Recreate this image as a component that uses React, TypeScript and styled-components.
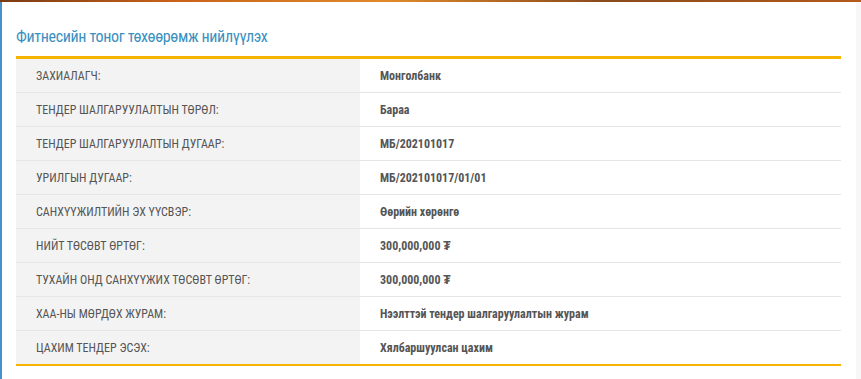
import React from 'react';
import styled, { createGlobalStyle } from 'styled-components';

const GlobalStyle = createGlobalStyle`
  html, body {
    margin: 0;
    padding: 0;
    background: #f7f7f7;
  }
  body {
    font-family: "Roboto Condensed", "Roboto", "Liberation Sans", sans-serif;
  }
`;

const Banner = styled.div`
  height: 2px;
  background: linear-gradient(90deg, #7a3a12 0%, #c8621a 20%, #e08a2a 45%, #8a4a1c 70%, #b45a1a 100%);
`;

const Page = styled.div`
  display: flex;
  height: 377px;
`;

const Content = styled.main`
  flex: 0 0 856px;
  box-sizing: border-box;
  background: #fff;
  border-left: 2px solid #4a8fc8;
  padding: 25px 15px 0 14px;
`;

const Title = styled.h2`
  margin: 0 0 9px;
  font-size: 16px;
  font-weight: 400;
  line-height: 20px;
  letter-spacing: -0.35px;
  color: #3a90c0;
`;

const Table = styled.div`
  border-top: 3px solid #f6b400;
  border-bottom: 2px solid #f6b400;
`;

const Row = styled.div`
  display: grid;
  grid-template-columns: 344px 1fr;
  box-sizing: border-box;
  height: 34px;
  & + & {
    border-top: 1px solid #e6e6e6;
  }
  &:first-child {
    height: 33px;
  }
`;

const Cell = styled.div<{ $label?: boolean }>`
  display: flex;
  align-items: center;
  padding-left: 20px;
  font-size: 12px;
  color: #555;
  font-weight: ${(p) => (p.$label ? 400 : 700)};
  background: ${(p) => (p.$label ? '#f3f3f3' : '#fff')};
  text-transform: ${(p) => (p.$label ? 'uppercase' : 'none')};
`;

const rows: [string, string][] = [
  ['Захиалагч:', 'Монголбанк'],
  ['Тендер шалгаруулалтын төрөл:', 'Бараа'],
  ['Тендер шалгаруулалтын дугаар:', 'МБ/202101017'],
  ['Урилгын дугаар:', 'МБ/202101017/01/01'],
  ['Санхүүжилтийн эх үүсвэр:', 'Өөрийн хөрөнгө'],
  ['Нийт төсөвт өртөг:', '300,000,000 ₮'],
  ['Тухайн онд санхүүжих төсөвт өртөг:', '300,000,000 ₮'],
  ['ХАА-ны мөрдөх журам:', 'Нээлттэй тендер шалгаруулалтын журам'],
  ['Цахим тендер эсэх:', 'Хялбаршуулсан цахим'],
];

const App = () => {
  return (
    <>
      <GlobalStyle />
      <Banner />
      <Page>
        <Content>
          <Title>Фитнесийн тоног төхөөрөмж нийлүүлэх</Title>
          <Table>
            {rows.map(([label, value]) => (
              <Row key={label}>
                <Cell $label>{label}</Cell>
                <Cell>{value}</Cell>
              </Row>
            ))}
          </Table>
        </Content>
      </Page>
    </>
  );
};

export default App;
